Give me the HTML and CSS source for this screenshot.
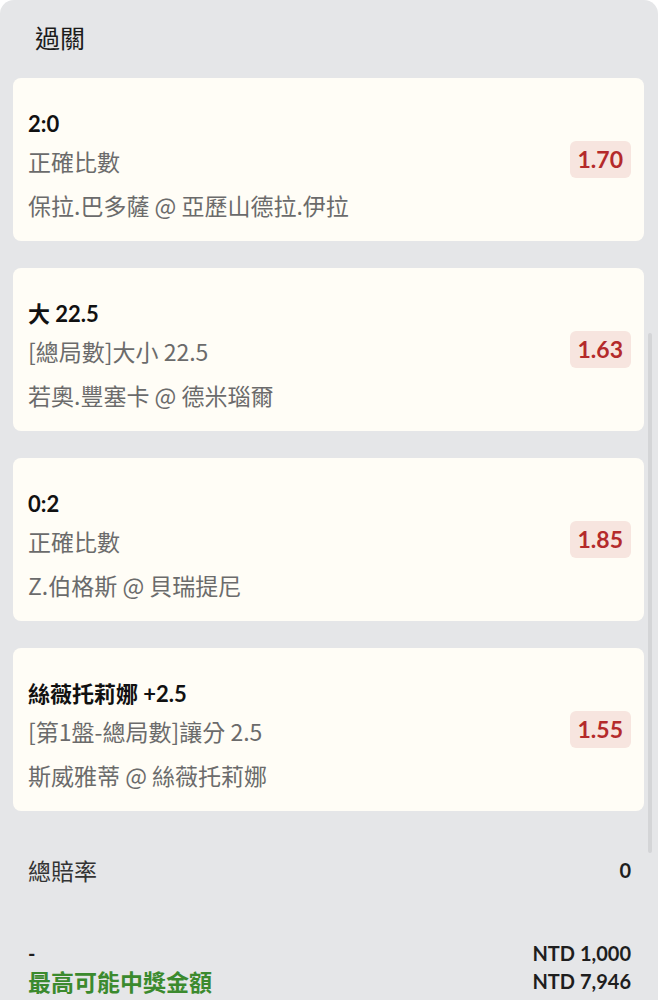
FILE: index.html
```html
<!DOCTYPE html>
<html lang="zh-Hant">
<head>
  <meta charset="UTF-8" />
  <title>過關</title>
  <link rel="stylesheet" href="styles.css">
</head>
<body>
  <div class="panel">
    <h2 class="panel-title">過關</h2>

    <div class="bet-list">
      <div class="bet">
        <div class="bet-info">
          <div class="bet-pick">2:0</div>
          <div class="bet-market">正確比數</div>
          <div class="bet-match">保拉.巴多薩 @ 亞歷山德拉.伊拉</div>
        </div>
        <span class="odds">1.70</span>
      </div>

      <div class="bet">
        <div class="bet-info">
          <div class="bet-pick">大 22.5</div>
          <div class="bet-market">[總局數]大小 22.5</div>
          <div class="bet-match">若奧.豐塞卡 @ 德米瑙爾</div>
        </div>
        <span class="odds">1.63</span>
      </div>

      <div class="bet">
        <div class="bet-info">
          <div class="bet-pick">0:2</div>
          <div class="bet-market">正確比數</div>
          <div class="bet-match">Z.伯格斯 @ 貝瑞提尼</div>
        </div>
        <span class="odds">1.85</span>
      </div>

      <div class="bet">
        <div class="bet-info">
          <div class="bet-pick">絲薇托莉娜 +2.5</div>
          <div class="bet-market">[第1盤-總局數]讓分 2.5</div>
          <div class="bet-match">斯威雅蒂 @ 絲薇托莉娜</div>
        </div>
        <span class="odds">1.55</span>
      </div>
    </div>

    <div class="row total-odds">
      <span>總賠率</span>
      <span class="amount">0</span>
    </div>

    <div class="row stake">
      <span class="amount">-</span>
      <span class="amount">NTD 1,000</span>
    </div>
    <div class="row payout">
      <span class="payout-label">最高可能中獎金額</span>
      <span class="amount">NTD 7,946</span>
    </div>

    <div class="scrollbar"></div>
  </div>
</body>
</html>
```

FILE: styles.css
```css
body {
  margin: 0;
  background: #ffffff;
  font-family: Lato, "Noto Sans CJK TC", sans-serif;
}

.panel {
  position: relative;
  min-height: 1000px;
  box-sizing: border-box;
  background: #e5e6e8;
  border-radius: 14px 14px 0 0;
  padding: 18px 14px 0 13px;
}

.panel-title {
  margin: 0 0 22px 22px;
  font-family: "Noto Sans CJK TC", sans-serif;
  font-size: 25px;
  font-weight: 400;
  line-height: 38px;
  color: #1c1c1c;
}

.bet-list {
  display: flex;
  flex-direction: column;
  gap: 27px;
}

.bet {
  display: flex;
  align-items: center;
  justify-content: space-between;
  background: #fffdf6;
  border-radius: 8px;
  padding: 31px 13px 19px 15px;
}

.bet-pick {
  font-size: 22px;
  font-weight: 700;
  line-height: 30px;
  color: #111111;
}

.bet-market,
.bet-match {
  font-family: "Noto Sans CJK TC", sans-serif;
  font-size: 23px;
  line-height: 34px;
  color: #6b6b6b;
}

.bet-market {
  margin-top: 5px;
}

.bet-match {
  margin-top: 10px;
}

.odds {
  margin-bottom: 12px;
  padding: 0 8px;
  line-height: 37px;
  font-size: 23px;
  font-weight: 700;
  color: #b42a2b;
  background: #f7e5df;
  border-radius: 6px;
}

.row {
  display: flex;
  justify-content: space-between;
  align-items: center;
  padding: 0 13px 0 15px;
  line-height: 28px;
}

.total-odds {
  margin-top: 44px;
  line-height: 30px;
  font-family: "Noto Sans CJK TC", sans-serif;
  font-size: 23px;
  color: #333333;
}

.stake {
  margin-top: 54px;
}

.amount {
  font-family: Lato, sans-serif;
  font-size: 20px;
  font-weight: 700;
  color: #1e1e1e;
}

.payout-label {
  font-family: "Noto Sans CJK TC", sans-serif;
  font-size: 23px;
  font-weight: 700;
  color: #3b8a2e;
}

.scrollbar {
  position: absolute;
  top: 333px;
  right: 6px;
  width: 4px;
  height: 520px;
  border-radius: 2px;
  background: #d4d5d7;
}
```
